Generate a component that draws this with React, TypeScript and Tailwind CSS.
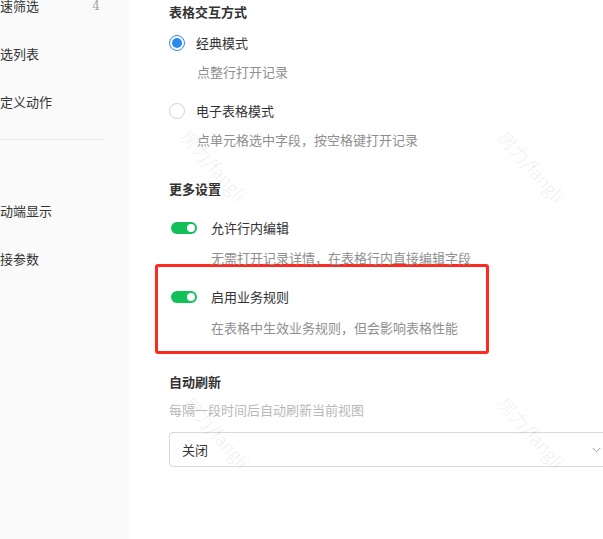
import React from "react";

const font = { fontFamily: '"Noto Sans CJK SC", "Noto Sans", sans-serif' };

function Radio({ checked }: { checked: boolean }) {
  return checked ? (
    <div className="w-4 h-4 rounded-full border border-[#2b8af0] flex items-center justify-center shrink-0">
      <div className="w-[10px] h-[10px] rounded-full bg-[#2b8af0]" />
    </div>
  ) : (
    <div className="w-4 h-4 rounded-full border border-[#d4d4d4] bg-white shrink-0" />
  );
}

function Toggle() {
  return (
    <div className="w-[26px] h-[12px] rounded-full bg-[#12c05a] flex items-center justify-end pr-[2px] shrink-0">
      <div className="w-[8px] h-[8px] rounded-full bg-white" />
    </div>
  );
}

function Watermark({ x, y }: { x: number; y: number }) {
  return (
    <div
      className="absolute pointer-events-none text-[18px] font-light text-[rgba(0,0,0,0.09)] whitespace-nowrap leading-none"
      style={{ left: x, top: y, transform: "translate(-50%, -50%) rotate(48deg)" }}
    >
      房力/fangli
    </div>
  );
}

export default function App() {
  const sideRow = "h-12 flex items-center justify-between pr-[29px] text-[13px] text-[#333]";
  return (
    <div className="relative w-[603px] h-[539px] overflow-hidden bg-white flex" style={font}>
      {/* sidebar */}
      <div className="w-[129px] shrink-0 bg-[#fafafa] overflow-hidden">
        <div className="-mt-[18px]">
          <div className={sideRow}>
            <span className="-ml-[13px]">快速筛选</span>
            <span className="text-[#a3a3a3] text-[12px]" style={{ fontFamily: '"DejaVu Serif", serif' }}>4</span>
          </div>
          <div className={sideRow}>
            <span className="-ml-[13px]">筛选列表</span>
          </div>
          <div className={sideRow}>
            <span className="-ml-[13px]">自定义动作</span>
          </div>
        </div>
        <div className="mt-[13px] h-px w-[105px] bg-[#e8e8e8]" />
        <div className="mt-[47px]">
          <div className={sideRow}>
            <span className="-ml-[13px]">移动端显示</span>
          </div>
          <div className={sideRow}>
            <span className="-ml-[13px]">链接参数</span>
          </div>
        </div>
      </div>

      {/* main */}
      <div className="flex-1 pl-[40px] text-[13px] leading-[20px] text-[#333]">
        <div className="pt-[2px] font-semibold">表格交互方式</div>

        <div className="mt-[11px] flex items-center h-5">
          <Radio checked />
          <span className="ml-[11px]">经典模式</span>
        </div>
        <div className="mt-[9px] pl-[28px] text-[#8f8f8f]">点整行打开记录</div>

        <div className="mt-[19px] flex items-center h-5">
          <Radio checked={false} />
          <span className="ml-[11px]">电子表格模式</span>
        </div>
        <div className="mt-[9px] pl-[28px] text-[#8f8f8f]">点单元格选中字段，按空格键打开记录</div>

        <div className="mt-[29px] font-semibold">更多设置</div>

        <div className="mt-[19px] flex items-center h-5 pl-[2px]">
          <Toggle />
          <span className="ml-[14px]">允许行内编辑</span>
        </div>
        <div className="mt-[10px] pl-[42px] text-[#8f8f8f]">无需打开记录详情，在表格行内直接编辑字段</div>

        <div className="-mt-[4px] -ml-[14px] w-[334px] border-[3px] border-[#ff2a1f] rounded-[3px] pl-[13px] pt-[20px] pb-[13px]">
          <div className="flex items-center h-5">
            <Toggle />
            <span className="ml-[14px]">启用业务规则</span>
          </div>
          <div className="mt-[11px] pl-[40px] text-[#8f8f8f]">在表格中生效业务规则，但会影响表格性能</div>
        </div>

        <div className="mt-[18px] font-semibold">自动刷新</div>
        <div className="mt-[8px] text-[#b8b8b8]">每隔一段时间后自动刷新当前视图</div>

        <div className="mt-[12px] w-[444px] h-[35px] border border-[#d9d9d9] rounded-[4px] flex items-center justify-between pl-[12px] pr-[11px]">
          <span>关闭</span>
          <svg width="9" height="6" viewBox="0 0 9 6" fill="none">
            <path d="M0.5 0.8 L4.5 4.8 L8.5 0.8" stroke="#9a9a9a" strokeWidth="1" />
          </svg>
        </div>
      </div>

      <Watermark x={214} y={165} />
      <Watermark x={532} y={166} />
      <Watermark x={217} y={432} />
      <Watermark x={532} y={432} />
    </div>
  );
}
